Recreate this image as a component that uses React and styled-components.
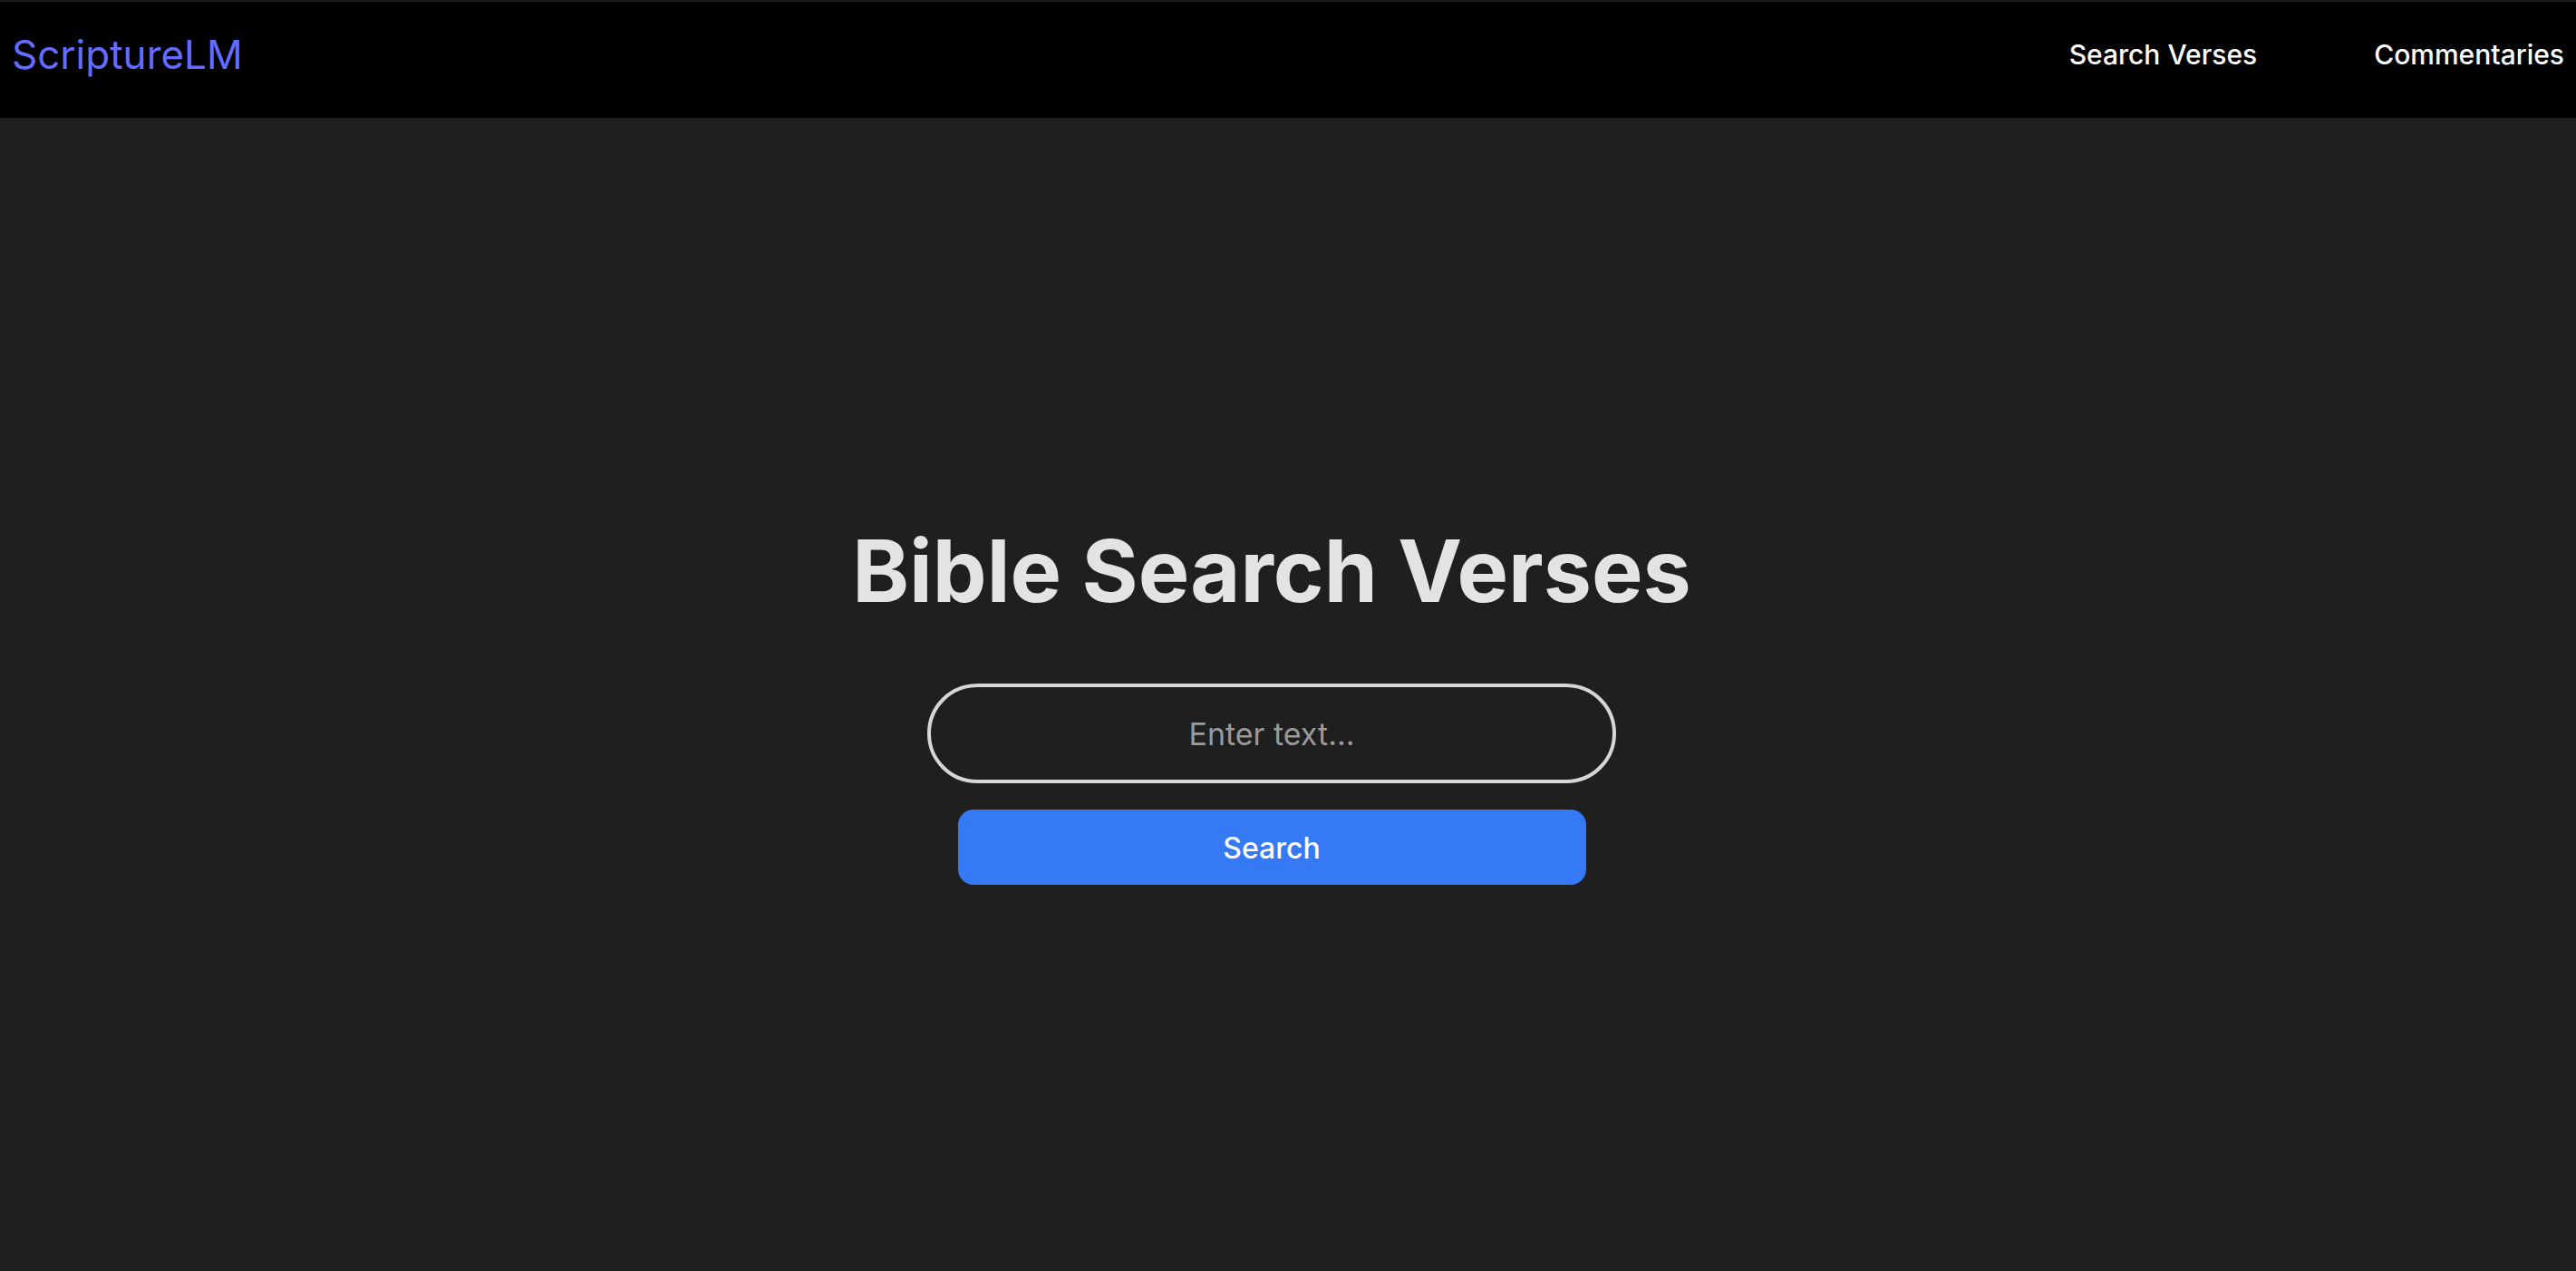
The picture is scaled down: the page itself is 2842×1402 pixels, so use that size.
import React from 'react'
import styled, { createGlobalStyle } from 'styled-components'

const GlobalStyle = createGlobalStyle`
  html, body {
    margin: 0;
    padding: 0;
    background: #201f20;
  }
  * {
    box-sizing: border-box;
  }
  body {
    font-family: Inter, "Noto Sans", sans-serif;
  }
`

const Page = styled.div`
  min-height: 100vh;
  display: flex;
  flex-direction: column;
  background: #201f20;
`

const Navbar = styled.nav`
  height: 130px;
  background: #000;
  border-top: 2px solid #1b1b1b;
  display: flex;
  align-items: center;
  justify-content: space-between;
  padding: 0 13px 12px 13px;
`

const Logo = styled.a`
  color: #646cff;
  font-size: 44px;
  font-weight: 400;
  text-decoration: none;
`

const NavLinks = styled.div`
  display: flex;
  gap: 129px;
`

const NavLink = styled.a`
  color: #fff;
  font-size: 30px;
  font-weight: 500;
  text-decoration: none;
`

const Main = styled.main`
  flex: 1;
  display: flex;
  flex-direction: column;
  align-items: center;
  justify-content: center;
  padding: 17px 36px 0 0;
`

const Title = styled.h1`
  margin: 0 0 67px;
  color: #e3e3e3;
  font-size: 95px;
  font-weight: 700;
  line-height: 1.21;
`

const SearchInput = styled.input`
  width: 760px;
  height: 110px;
  border: 4px solid #d6d6d6;
  border-radius: 60px;
  background: #1f1f1f;
  color: #e3e3e3;
  font-family: Inter, sans-serif;
  font-size: 34px;
  text-align: center;
  outline: none;

  &::placeholder {
    color: #9a9a9a;
  }
`

const SearchButton = styled.button`
  margin-top: 29px;
  width: 693px;
  height: 83px;
  border: none;
  border-radius: 17px;
  background: #3679f4;
  color: #fff;
  font-family: Inter, sans-serif;
  font-size: 32px;
  font-weight: 500;
  padding-top: 3px;
  cursor: pointer;
`

export default function App() {
  return (
    <Page>
      <GlobalStyle />
      <Navbar>
        <Logo href="#">ScriptureLM</Logo>
        <NavLinks>
          <NavLink href="#">Search Verses</NavLink>
          <NavLink href="#">Commentaries</NavLink>
        </NavLinks>
      </Navbar>
      <Main>
        <Title>Bible Search Verses</Title>
        <SearchInput type="text" placeholder="Enter text..." />
        <SearchButton>Search</SearchButton>
      </Main>
    </Page>
  )
}
